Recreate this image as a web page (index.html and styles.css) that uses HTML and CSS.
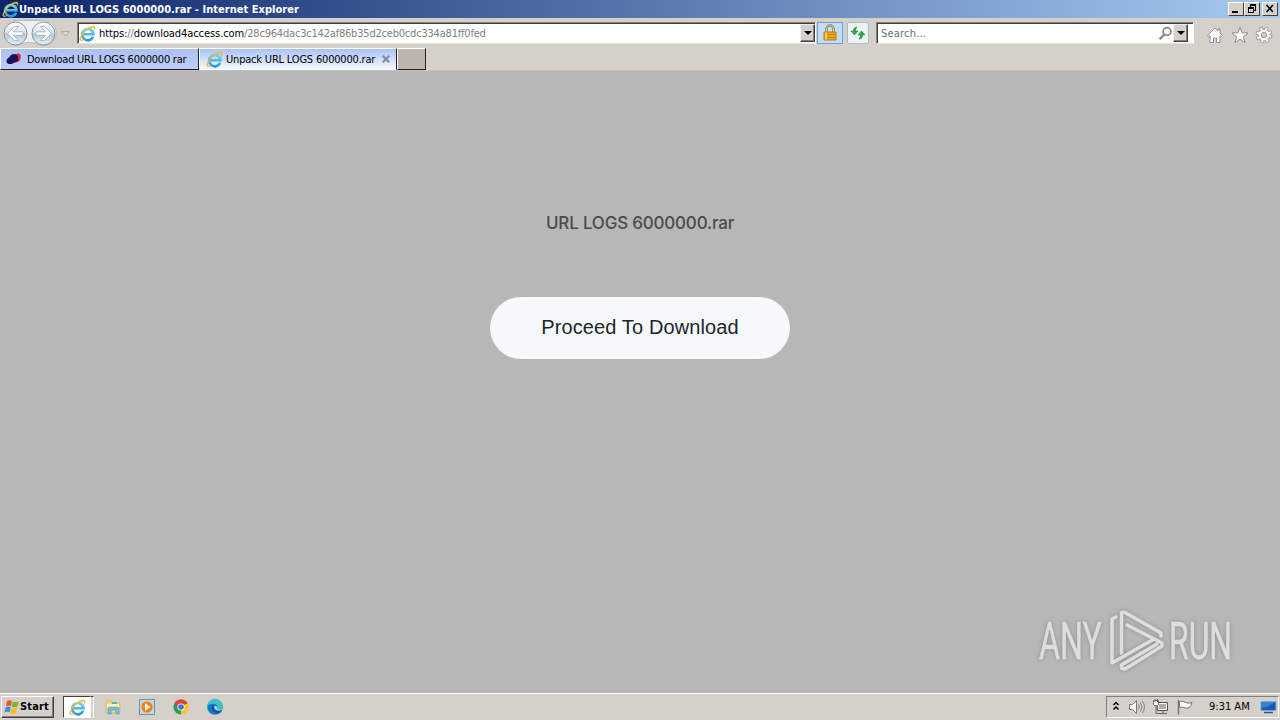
FILE: index.html
```
<!DOCTYPE html>
<html lang="en">
<head>
  <meta charset="UTF-8">
  <title>Unpack URL LOGS 6000000.rar</title>
  <link rel="stylesheet" href="styles.css">
</head>
<body>
  <svg width="0" height="0" class="defs">
    <defs>
      <linearGradient id="blue" x1="0" y1="0" x2="0" y2="1">
        <stop offset="0" stop-color="#72d0f5"/>
        <stop offset="1" stop-color="#2b9adb"/>
      </linearGradient>
      <linearGradient id="glass" x1="0" y1="0" x2="0" y2="1">
        <stop offset="0" stop-color="#f8fbfd"/>
        <stop offset=".48" stop-color="#dae3ea"/>
        <stop offset=".52" stop-color="#b7c7d4"/>
        <stop offset="1" stop-color="#e2f1f8"/>
      </linearGradient>
      <symbol id="ie" viewBox="0 0 16 16">
        <path d="M13.300 10.900A5.300 5.300 0 1 1 13.600 8.700H4.500" fill="none" stroke="url(#blue)" stroke-width="2.500"/>
        <path d="M2.200 14.900C-1 15 1 9 6 4.600 10 .8 15.400-.5 15.200 2.600 15.100 3.500 14.800 4.200 14.400 5 15 1.300 11.300 1.600 6.900 5.200 2.200 9.300.6 13.900 2.500 14.200 3.500 14.300 4.400 13.700 5.400 13.200 4.300 14.100 3.200 14.800 2.200 14.900Z" fill="#f6c42e" stroke="#dfa51c" stroke-width=".3"/>
      </symbol>
    </defs>
  </svg>

  <div class="titlebar">
    <svg class="ie-title" width="17" height="17"><use href="#ie"/></svg>
    <span class="title">Unpack URL LOGS 6000000.rar - Internet Explorer</span>
    <div class="win-btns">
      <div class="win-btn"><svg width="14" height="12"><path d="M3 9h6" stroke="#000" stroke-width="2"/></svg></div>
      <div class="win-btn"><svg width="14" height="12" shape-rendering="crispEdges"><path d="M5 2h6M3 5h6" stroke="#000" stroke-width="2"/><path d="M5.500 2v3M10.500 2v5.500H9M3.500 5v4.500h5V5" fill="none" stroke="#000"/></svg></div>
      <div class="win-btn close"><svg width="14" height="12"><path d="M3.500 2l6.500 7M10 2l-6.500 7" stroke="#000" stroke-width="1.600"/></svg></div>
    </div>
  </div>

  <div class="navbar">
    <svg class="arrows" width="76" height="28" viewBox="0 0 76 28">
      <path d="M14 1.500h30a12 12 0 0 1 0 25c-6 0-8-3-15-3s-9 3-15 3z" fill="#f0f0f0" stroke="#b9b9b9"/>
      <circle cx="15.500" cy="14.500" r="11.500" fill="url(#glass)" stroke="#8b949c"/>
      <circle cx="43.500" cy="14.500" r="11.500" fill="url(#glass)" stroke="#8b949c"/>
      <path d="M7.500 14.500l7-7h4l-5 5.300H23v3.500h-9.500l5 5.200h-4z" fill="#fff" stroke="#9aa9b5" stroke-width=".8"/>
      <path d="M51.500 14.500l-7-7h-4l5 5.300H36v3.500h9.500l-5 5.200h4z" fill="#fff" stroke="#9aa9b5" stroke-width=".8"/>
      <path d="M61.500 12.500h8L65.500 17z" fill="#dedbd5" stroke="#aaa7a2"/>
    </svg>
    <div class="field address">
      <svg width="17" height="17"><use href="#ie"/></svg>
      <span class="url">https:<i>//</i>download4access.com</span><span class="path">/28c964dac3c142af86b35d2ceb0cdc334a81ff0fed</span>
      <div class="drop"></div>
    </div>
    <div class="tool lock">
      <svg width="16" height="18" viewBox="0 0 16 18">
        <path d="M4.500 8V5a3.500 3.500 0 0 1 7 0v3" fill="none" stroke="#8c7a4c" stroke-width="2.400"/>
        <path d="M4.500 8V5a3.500 3.500 0 0 1 7 0v3" fill="none" stroke="#e3d9b3" stroke-width=".8"/>
        <path d="M2 8h12v8H2z" fill="#eda71c" stroke="#b87a0b"/>
        <path d="M3 10.500h10M3 13.500h10" stroke="#c5840c"/>
        <path d="M4 8.500v7" stroke="#ffdb6b" stroke-width="1.500"/>
      </svg>
    </div>
    <div class="tool refresh">
      <svg width="16" height="16" viewBox="0 0 16 16">
        <path d="M7 2C5 2 3.500 3 3.500 6H1l3.500 4L8 6H5.500C5.500 4 6 3 7 2z" fill="#35a646" stroke="#20883a" stroke-width=".6"/>
        <path d="M9 14c2 0 3.500-1 3.500-4H15l-3.500-4L8 10h2.500c0 2-.5 3-1.500 4z" fill="#35a646" stroke="#20883a" stroke-width=".6"/>
      </svg>
    </div>
    <div class="field search">
      <span class="hint">Search...</span>
      <svg width="15" height="15" viewBox="0 0 15 15"><circle cx="9" cy="5.500" r="3.900" fill="none" stroke="#85858b" stroke-width="1.700"/><path d="M6.200 8.600L1.500 13.300" stroke="#85858b" stroke-width="2.300"/></svg>
      <div class="drop"></div>
    </div>
    <div class="cmds">
      <svg width="18" height="18" viewBox="0 0 18 18"><path d="M9 2L1.500 9.500l1.300 1.200L4 9.700V16.500h3.500v-4.500h3v4.500H14V9.700l1.200 1 1.300-1.200L14 7V3h-2v2z" fill="#fff" stroke="#8f8f8f"/></svg>
      <svg width="18" height="18" viewBox="0 0 18 18"><path d="M9 1.200l2.100 5.600 5.900.2-4.700 3.700 1.700 5.800L9 13.200l-5 3.300 1.700-5.800L1 7l5.900-.2z" fill="#fff" stroke="#8f8f8f"/></svg>
      <svg width="18" height="18" viewBox="0 0 18 18">
        <circle cx="9" cy="9" r="6.200" fill="none" stroke="#8f8f8f" stroke-width="4.400" stroke-dasharray="2.900 1.970"/><circle cx="9" cy="9" r="6" fill="#fff" stroke="#8f8f8f"/><circle cx="9" cy="9" r="6.200" fill="none" stroke="#fff" stroke-width="2.800" stroke-dasharray="1.900 2.970" stroke-dashoffset="-.5"/>
        <circle cx="9" cy="9" r="2.600" fill="#d5d0ca" stroke="#8f8f8f"/>
      </svg>
    </div>
  </div>

  <div class="tabs">
    <div class="tab">
      <svg width="16" height="16" viewBox="0 0 16 16"><path d="M9 4c3-3 6-1.500 5.700 2 .3 4-2.700 5-6 6z" fill="#e6213f"/><path d="M.5 10.500c0-3 2-3.500 3-4.500 1.500-4 8-4 8.500 0 1.500 4-2 5.500-4 5.500-2 2.500-7.500 2-7.500-1z" fill="#17145c"/></svg>
      <span class="tab-one">Download URL LOGS 6000000 rar</span>
    </div>
    <div class="tab active">
      <svg width="17" height="17"><use href="#ie"/></svg>
      <span class="tab-two">Unpack URL LOGS 6000000.rar</span>
      <svg class="x" width="8" height="8"><path d="M.8.800l6.400 6.400M7.200.8L.8 7.200" stroke="#83899b" stroke-width="2"/></svg>
    </div>
    <div class="new-tab"></div>
  </div>

  <div class="page">
    <div class="file">URL LOGS 6000000.rar</div>
    <a class="proceed"><span>Proceed To Download</span></a>
    <svg class="watermark" width="216" height="76" viewBox="1030 602 216 76">
      <g class="mark-text">
        <text x="1039" y="659" textLength="63" lengthAdjust="spacingAndGlyphs">ANY</text>
        <text x="1169" y="659" textLength="63" lengthAdjust="spacingAndGlyphs">RUN</text>
      </g>
      <g class="mark-line">
        <path d="M1116 617L1112 619V663L1154 639"/>
        <path d="M1121.500 653V612.500L1125 612.500 1161 633V636"/>
        <path d="M1127 625L1162 643V646L1125 669L1121.500 668V665L1157 644"/>
      </g>
    </svg>
  </div>

  <div class="taskbar">
    <div class="start">
      <svg width="16" height="16" viewBox="0 0 16 16"><path d="M3 2q2.500-1.500 5 0L7 7.300q-2.500-1.500-5 0z" fill="#e95a24"/><path d="M8.800 2.500q2.500 1.300 6-.3l-1.300 5.300q-3 1.500-5.700.2z" fill="#78b72b"/><path d="M1.700 8.300q2.500-1.500 5 0l-1.200 5.200q-2.500-1.500-5 0z" fill="#3d8de0"/><path d="M7.500 8.800q2.500 1.300 5.700-.2L12 13.900q-3 1.500-5.700.1z" fill="#f8bd17"/></svg>
      <b>Start</b>
    </div>
    <div class="running"><div class="run-box"><svg width="17" height="17"><use href="#ie"/></svg></div><div class="run-edge"></div></div>
    <div class="quick">
      <svg width="18" height="18" viewBox="0 0 18 18"><path d="M2 3h5l1 2h8v10H2z" fill="#efd77d" stroke="#cfb35c" stroke-width=".6"/><path d="M3 6h12v3H3z" fill="#fff3b5"/><path d="M4 16v-5q0-2 2-2h7q2 0 2 2v5h-3v-4H7v4z" fill="#79bddd" stroke="#4e99bd" stroke-width=".6"/><path d="M8 4h5v2H8z" fill="#65b48c"/></svg>
      <svg width="18" height="18" viewBox="0 0 18 18"><path d="M1.500 1.500h15v15h-15z" fill="#b9d9ef" stroke="#5b94c5"/><circle cx="9" cy="9" r="6" fill="#f28216" stroke="#ffd28c" stroke-width=".6"/><path d="M7 5.200v7.600L12.500 9z" fill="#fff"/></svg>
      <svg width="18" height="18" viewBox="0 0 18 18"><path d="M9 9L2.500 5.250A7.500 7.500 0 0 1 15.500 5.250z" fill="#dc4437"/><path d="M9 9V16.500A7.500 7.500 0 0 1 2.500 5.250z" fill="#1ba25b"/><path d="M9 9l6.500-3.750A7.500 7.500 0 0 1 9 16.500z" fill="#fbc917"/><path d="M9 5.500h6.600A7.500 7.500 0 0 0 2.500 5.200L6 11z" fill="#dc4437"/><circle cx="9" cy="9" r="3.600" fill="#fff"/><circle cx="9" cy="9" r="2.800" fill="#3975df"/></svg>
      <svg width="18" height="18" viewBox="0 0 18 18"><circle cx="9" cy="9" r="7.800" fill="#0d7acb"/><path d="M1.200 9C1 4 5 1 9 1.200c5 0 8.200 4 7.700 7.400-.5 3-4 3.400-6 2.400 1-1 1.300-5-3.200-5.200C4 5.700 1.600 7 1.200 9z" fill="#3cc3ca"/><path d="M7 7c-3 3-.5 8 5 8 1.800 0 3.200-1 3.800-2-3 1-7-.2-6.800-4z" fill="#1355a2"/><path d="M8.500 8c-1 2 .5 4.500 4 4.500 1.300 0 2.500-.4 3.500-1l1.700-2C17 11 13 12 10.700 11c.8-.8.800-3-2.200-3z" fill="#d5d0ca"/></svg>
    </div>
    <div class="tray">
      <svg width="8" height="12" viewBox="0 0 8 12"><path d="M1.500 4L4 1.500 6.500 4M1.500 8.500L4 6l2.500 2.500" fill="none" stroke="#000" stroke-width="1.500"/></svg>
      <svg class="vol" width="18" height="16" viewBox="0 0 18 16"><path d="M1.500 5.500h3l4-4v13l-4-4h-3z" fill="#fff" stroke="#777"/><path d="M10.500 5.500q1.500 2.500 0 5M12.500 3.500q3 4.500 0 9M14.500 2q4 6 0 12" fill="none" stroke="#888"/></svg>
      <svg class="net" width="18" height="16" viewBox="0 0 18 16"><path d="M5.500 3.500h10v8h-10z" fill="#aaa" stroke="#555"/><path d="M6.500 4.500h8v6h-8z" fill="none" stroke="#fff"/><path d="M7 14.500h8M11 12v2.500" stroke="#666"/><path d="M1.500 1.500h5v4l-1 1h-3l-1-1z" fill="#fff" stroke="#666"/><path d="M4 7v7.500h3" fill="none" stroke="#666"/><path d="M3 0v3M5.500 0v3" stroke="#666"/></svg>
      <svg class="flag" width="18" height="16" viewBox="0 0 18 16"><path d="M3.500 2.500q3-1 6.500 1 2 1.500 6 0-1 3-3 5.500-3 .5-5-.5-2-.8-4.500 0z" fill="#fff" stroke="#777"/><path d="M2.500 1v14.500" stroke="#777" stroke-width="1.500"/></svg>
      <span class="clock">9:31 AM</span>
      <svg width="17" height="14" viewBox="0 0 17 14"><path d="M1 1.500h15v9H1z" fill="#1659b0" stroke="#7fa9d5"/><path d="M1.500 2h14L7 7l-5.500 1z" fill="#397fd0"/><path d="M4 12.500h9" stroke="#36577d" stroke-width="1.500"/></svg>
    </div>
  </div>
</body>
</html>
```

FILE: styles.css
```
* {
  box-sizing: border-box;
}
body {
  margin: 0;
  width: 1280px;
  height: 720px;
  overflow: hidden;
  display: flex;
  flex-direction: column;
  background: #d5d0ca;
  color: #000;
  font: 11px/14px "DejaVu Sans Condensed", "DejaVu Sans", sans-serif;
  white-space: nowrap;
}
svg {
  display: block;
  flex: none;
}
.defs {
  position: absolute;
}

/* title bar */
.titlebar {
  height: 18px;
  display: flex;
  align-items: center;
  padding: 0 2px;
  background: linear-gradient(to right, #0b246a, #a6caf0);
}
.title {
  padding-top: 1px;
  color: #fff;
  font-weight: bold;
  letter-spacing: .03px;
}
.win-btns {
  margin-left: auto;
  display: flex;
}
.win-btn {
  width: 16px;
  height: 14px;
  background: #d5d0ca;
  border: 1px solid;
  border-color: #fff #404040 #404040 #fff;
}
.close {
  margin-left: 2px;
}

/* navigation row */
.navbar {
  height: 30px;
  display: flex;
  align-items: center;
}
.arrows {
  margin-right: 1px;
}
.field {
  height: 22px;
  display: flex;
  align-items: center;
  background: #fff;
  border: 1px solid;
  border-color: #808080 #fff #e6e2dc #808080;
  box-shadow: inset 1px 1px #404040;
}
.address {
  width: 739px;
  padding-left: 1px;
}
.url, .path, .hint {
  padding-top: 2px;
}
.url {
  margin-left: 3px;
  letter-spacing: -.08px;
}
.url i {
  color: #777;
  font-style: normal;
}
.path {
  color: #808080;
  letter-spacing: -.2px;
}
.drop {
  width: 15px;
  height: 18px;
  margin-left: auto;
  display: flex;
  align-items: center;
  justify-content: center;
  background: #d5d0ca;
  border: 1px solid;
  border-color: #eee #404040 #404040 #eee;
  box-shadow: inset -1px -1px #808080;
}
.drop::before {
  content: "";
  border: 4px solid transparent;
  border-top-color: #000;
  border-bottom: 0;
}
.tool {
  height: 22px;
  display: flex;
  align-items: center;
  justify-content: center;
  border: 1px solid #a9bccb;
}
.lock {
  width: 26px;
  margin-left: 1px;
  background: #c5dcf6;
  border-color: #70a0dc;
}
.refresh {
  width: 22px;
  margin: 0 7px 0 4px;
  background: #edf2f5;
  border-radius: 2px;
}
.search {
  width: 318px;
  padding-left: 4px;
  padding-right: 5px;
}
.hint {
  color: #6d6d6d;
  flex: 1;
  letter-spacing: .2px;
}
.cmds {
  display: flex;
  gap: 6.5px;
  margin: 3px 0 0 12px;
}

/* tabs */
.tabs {
  height: 23px;
  display: flex;
  border-bottom: 1px solid #c5c2be;
}
.tab {
  width: 199px;
  height: 22px;
  display: flex;
  align-items: center;
  padding-left: 5px;
  background: linear-gradient(#abc1f4, #c0cef8);
  border: 1px solid;
  border-color: #fff #202020 #202020 #fff;
}
.tab span {
  margin-left: 5px;
  padding-top: 2px;
  letter-spacing: -.25px;
}
.active {
  width: 198px;
  padding-left: 6px;
  background: linear-gradient(#a8c3fb, #dae5fd 65%, #f5f8ff);
  border-bottom-color: #f5f8ff;
}
.tab .tab-two {
  margin-left: 3px;
  letter-spacing: -.19px;
}
.x {
  margin-left: 7px;
}
.new-tab {
  width: 29px;
  height: 22px;
  background: #bbb5ae;
  border: 1px solid;
  border-color: #fff #202020 #202020 #fff;
}

/* page */
.page {
  position: relative;
  flex: 1;
  display: flex;
  flex-direction: column;
  align-items: center;
  padding-top: 140px;
  background: #b7b7b7;
}
.file {
  height: 24px;
  color: #4b4b4b;
  font: 500 17px/24px Inter, sans-serif;
  letter-spacing: -.2px;
}
.proceed {
  width: 300px;
  height: 62px;
  margin-top: 62px;
  border-radius: 31px;
  background: #f5f9fc;
  color: #212529;
  font: 20px/60px "Liberation Sans", Arial, sans-serif;
  letter-spacing: .12px;
  text-align: center;
}
.watermark {
  position: absolute;
  right: 34px;
  bottom: 15px;
  filter: drop-shadow(0 0 2px rgba(90, 90, 90, .45));
}
.mark-text {
  fill: #dedede;
  stroke: #dedede;
  stroke-width: .5;
  font: 52px Roboto, sans-serif;
}
.mark-line {
  fill: none;
  stroke: #dedede;
  stroke-width: 3.5;
  stroke-linejoin: round;
  stroke-linecap: round;
}

/* taskbar */
.taskbar {
  height: 27px;
  display: flex;
  align-items: center;
  border-top: 1px solid #fff;
  padding: 0 1px 1px;
}
.start {
  width: 53px;
  height: 22px;
  display: flex;
  align-items: center;
  padding-left: 2px;
  border: 1px solid;
  border-color: #fff #404040 #404040 #fff;
  box-shadow: inset -1px -1px #808080;
}
.start b {
  letter-spacing: .15px;
}
.running {
  display: flex;
  margin-left: 9px;
}
.run-box {
  width: 28px;
  height: 22px;
  padding: 2px 0 0 5px;
  background: #fff;
  border: 1px solid;
  border-color: #404040 #fff #fff #404040;
}
.run-edge {
  width: 3px;
  border-top: 1px solid #404040;
  border-right: 1px solid #fff;
}
.quick {
  display: flex;
  gap: 16px;
  margin-left: 10px;
}
.tray {
  width: 173px;
  height: 22px;
  margin-left: auto;
  display: flex;
  align-items: center;
  padding-left: 5px;
  border: 1px solid;
  border-color: #808080 #fff #fff #808080;
}
.vol {
  margin-left: 8px;
}
.net, .flag {
  margin-left: 6px;
}
.clock {
  width: 42px;
  margin: 0 9px 0 15px;
}
```
